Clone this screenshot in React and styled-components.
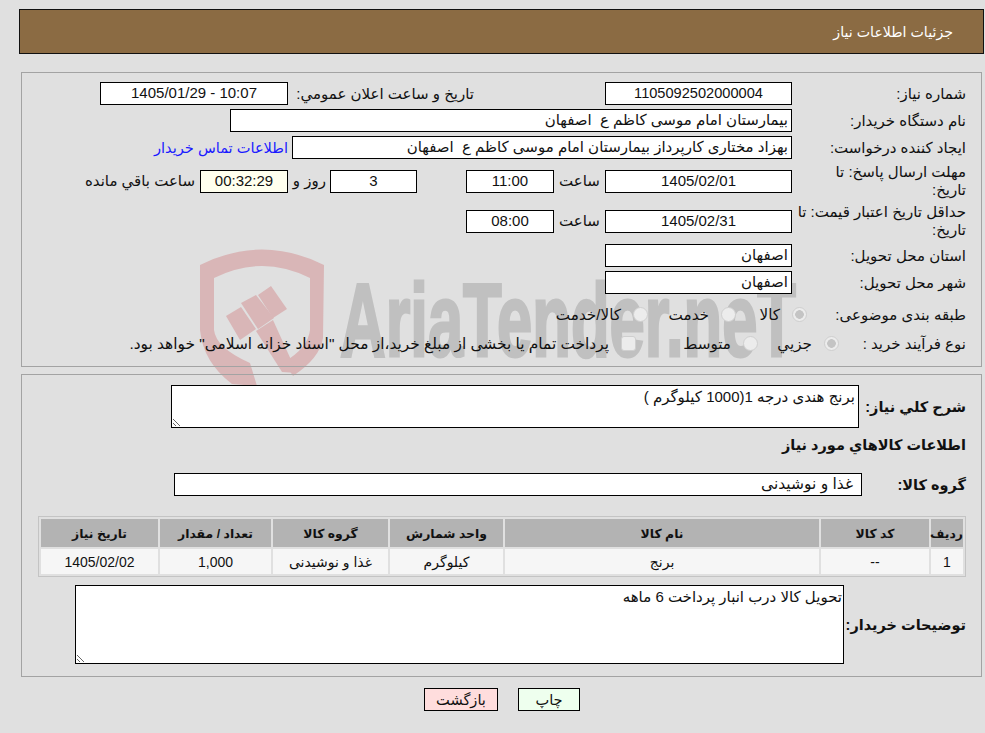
import React from "react";
import styled, { createGlobalStyle } from "styled-components";

const stack = `"Liberation Sans", "DejaVu Sans", sans-serif`;

const Global = createGlobalStyle`
  html, body { margin: 0; padding: 0; background: #e0e0e0; }
  body { font-family: ${stack}; font-size: 15px; color: #111; }
`;
const Page = styled.div`
  position: relative; width: 985px; height: 733px; overflow: hidden; direction: rtl;
  display: flex; flex-direction: column;
`;
const Mark = styled.svg`
  position: absolute; left: 190px; top: 240px; width: 630px; height: 170px; pointer-events: none;
`;
const Header = styled.header`
  position: relative; margin: 9px 1px 0 19px; height: 43px; background: #8b6b43;
  border: 1px solid #111; display: flex; align-items: center; padding-right: 30px;
  color: #fff; font-size: 14.2px;
`;
const Panel = styled.section`
  position: relative; margin: ${p => p.$top}px 3px 0 21px; height: ${p => p.$h}px; box-sizing: border-box;
  border: 1px solid #a3a3a3; padding: ${p => p.$pad}px 15px 0 0;
  display: flex; flex-direction: column;
`;
const Row = styled.div`
  display: flex; align-items: center; min-height: 23px; margin-bottom: ${p => p.$gap ?? 4}px;
  margin-top: ${p => p.$top ?? 0}px;
`;
const Label = styled.div`
  width: ${p => p.$w ?? 174}px; flex: none; line-height: 18px; font-weight: ${p => p.$bold ? 700 : 400};
  font-size: ${p => p.$bold ? "14.5px" : "inherit"}; box-sizing: border-box;
  white-space: ${p => p.$bold ? "nowrap" : "normal"};
`;
const Box = styled.div`
  width: ${p => p.$w}px; height: 23px; box-sizing: border-box; flex: none;
  margin-right: ${p => p.$mr ?? 0}px; border: 1px solid #000;
  background: ${p => p.$bg ?? "#fff"}; text-align: ${p => p.$pad != null ? "start" : "center"};
  padding: 0 ${p => p.$pad ?? 0}px; line-height: 20px; white-space: pre; overflow: hidden;
  font-size: ${p => p.$size ?? 15}px;
`;
const Inline = styled.span`
  margin-right: ${p => p.$mr ?? 0}px; width: ${p => p.$w ? `${p.$w}px` : "auto"}; flex: none;
  text-align: ${p => p.$flush ? "start" : "center"}; white-space: nowrap;
`;
const Link = styled.a`
  color: #1a1aff; margin-right: 4px; text-decoration: none; white-space: nowrap; font-size: 14.6px;
`;
const Options = styled.div`
  display: flex; align-items: center; white-space: nowrap; font-size: 15.2px;
`;
const Option = styled.label`
  display: flex; align-items: center; gap: 12px; width: ${p => p.$w ? `${p.$w}px` : "auto"}; flex: none;
  font-size: ${p => p.$size ? `${p.$size}px` : "inherit"};
`;
const Radio = styled.input`
  appearance: none; margin: 0; flex: none; width: 15px; height: 15px; box-sizing: border-box;
  border-radius: ${p => p.type === "checkbox" ? "3px" : "50%"};
  border: 1px solid #cfcfcf; background: ${p => p.checked ? "radial-gradient(circle, #c4c4c4 0 4px, #ececec 4.6px)" : "#ececec"};
`;
const TextArea = styled.textarea`
  display: block; width: ${p => p.$w}px; height: ${p => p.$h}px; box-sizing: border-box; flex: none; margin: 0;
  border: 1px solid #000; background: #fff; padding: 3px ${p => p.$pr}px 3px 3px; color: #111;
  font: 15px/16px ${stack}; direction: rtl; outline: none; resize: both;
`;
const Table = styled.table`
  width: 928px; height: 61px; border: 1px solid #c4c4c4; border-spacing: 2px; table-layout: fixed;
  border-collapse: separate; flex: none; box-sizing: border-box;
`;
const Head = styled.th`
  background: #b3b3b3; font-size: 12.4px; font-weight: 700; padding: 0; height: 28px;
`;
const Cell = styled.td`
  background: #f6f6f6; font-size: 14px; text-align: center; padding: 0; height: 25px;
`;
const Buttons = styled.div`
  display: flex; justify-content: center; gap: 20px; margin-top: 11px; padding-left: 19px; direction: ltr;
`;
const Button = styled.button`
  width: ${p => p.$w}px; height: 23px; box-sizing: border-box; border: 1px solid #000; background: ${p => p.$bg};
  font: 14.6px ${stack}; color: #111; padding: 0;
`;

const columns = [
  ["ردیف", 32], ["کد کالا", 108], ["نام کالا", 314], ["واحد شمارش", 113],
  ["گروه کالا", 115], ["تعداد / مقدار", 111], ["تاریخ نیاز", 117],
];
const cells = ["1", "--", "برنج", "کیلوگرم", "غذا و نوشیدنی", "1,000", "1405/02/02"];

export default function App() {
  return (
    <Page>
      <Global />
      <Mark viewBox="190 240 630 170">
        <g fill="#d9b6b7">
          <path d="M200 265 Q262 234 324 265 L323 338 Q320 358 293 376 L284 362 Q308 348 310 330 L310 278 Q262 254 214 278 L214 330 Q216 348 250 363 L257 386 L232 384 Q203 362 200 330 Z" />
          <path d="M226 316 L241 307 L256 329 L240 340 Z" />
          <path d="M241 303 L256 295 L274 318 L258 329 Z" />
          <path d="M258 295 L271 286 L287 309 L273 318 Z" />
          <path d="M256 331 L273 320 L297 373 L282 372 Z" />
        </g>
        <text x="340" y="356" fill="#c0c0c0" stroke="#c0c0c0" strokeWidth="3" fontFamily="Liberation Sans, sans-serif" fontWeight="700" fontSize="104" textLength="456" lengthAdjust="spacingAndGlyphs" direction="ltr">AriaTender.neT</text>
      </Mark>
      <Header>جزئیات اطلاعات نیاز</Header>
      <Panel $top={18} $h={295} $pad={9}>
        <Row>
          <Label>شماره نیاز:</Label>
          <Box $w={187} $size={14.6}>1105092502000004</Box>
          <Inline $mr={131} $w={181} $flush>تاریخ و ساعت اعلان عمومي:</Inline>
          <Box $w={188} $mr={5}>10:07 - 1405/01/29</Box>
        </Row>
        <Row>
          <Label>نام دستگاه خریدار:</Label>
          <Box $w={562} $pad={3}>بیمارستان امام موسی کاظم ع  اصفهان</Box>
        </Row>
        <Row>
          <Label>ایجاد کننده درخواست:</Label>
          <Box $w={500} $pad={3}>بهزاد مختاری کارپرداز بیمارستان امام موسی کاظم ع  اصفهان</Box>
          <Link href="#">اطلاعات تماس خریدار</Link>
        </Row>
        <Row>
          <Label>مهلت ارسال پاسخ: تا<br />تاریخ:</Label>
          <Box $w={187}>1405/02/01</Box>
          <Inline $w={51}>ساعت</Inline>
          <Box $w={88}>11:00</Box>
          <Box $w={87} $mr={49}>3</Box>
          <Inline $mr={4} $w={38} $flush>روز و</Inline>
          <Box $w={88} $bg="#ffffee">00:32:29</Box>
          <Inline $mr={5}>ساعت باقي مانده</Inline>
        </Row>
        <Row $gap={5}>
          <Label>حداقل تاریخ اعتبار قیمت: تا تاریخ:</Label>
          <Box $w={187}>1405/02/31</Box>
          <Inline $w={51}>ساعت</Inline>
          <Box $w={88}>08:00</Box>
        </Row>
        <Row>
          <Label>استان محل تحویل:</Label>
          <Box $w={187} $pad={3}>اصفهان</Box>
        </Row>
        <Row $gap={9}>
          <Label>شهر محل تحویل:</Label>
          <Box $w={187} $pad={3}>اصفهان</Box>
        </Row>
        <Row $gap={6}>
          <Label $w={159}>طبقه بندی موضوعی:</Label>
          <Options>
            <Option $w={71}><Radio type="radio" disabled checked readOnly />کالا</Option>
            <Option $w={88}><Radio type="radio" disabled readOnly />خدمت</Option>
            <Option><Radio type="radio" disabled readOnly />کالا/خدمت</Option>
          </Options>
        </Row>
        <Row>
          <Label $w={127}>نوع فرآیند خرید :</Label>
          <Options>
            <Option $w={81}><Radio type="radio" disabled checked readOnly />جزیي</Option>
            <Option $w={122}><Radio type="radio" disabled readOnly />متوسط</Option>
            <Option $size={15.4}><Radio type="checkbox" disabled readOnly />پرداخت تمام یا بخشی از مبلغ خرید،از محل "اسناد خزانه اسلامی" خواهد بود.</Option>
          </Options>
        </Row>
      </Panel>
      <Panel $top={7} $h={303} $pad={10}>
        <Row $gap={5}>
          <Label $w={107} $bold>شرح كلي نياز:</Label>
          <TextArea $w={688} $h={43} $pr={3} readOnly defaultValue="برنج هندی درجه 1(1000 کیلوگرم )" />
        </Row>
        <Row $gap={17}>
          <Label $w={400} $bold>اطلاعات كالاهاي مورد نياز</Label>
        </Row>
        <Row $gap={20}>
          <Label $w={104} $bold>گروه کالا:</Label>
          <Box $w={688} $pad={8} $size={15.5}>غذا و نوشیدنی</Box>
        </Row>
        <Table>
          <colgroup>{columns.map(([name, w]) => <col key={name} style={{ width: w }} />)}</colgroup>
          <thead><tr>{columns.map(([name]) => <Head key={name}>{name}</Head>)}</tr></thead>
          <tbody><tr>{cells.map((c, i) => <Cell key={i}>{c}</Cell>)}</tr></tbody>
        </Table>
        <Row $top={8}>
          <Label $w={122} $bold>توضیحات خریدار:</Label>
          <TextArea $w={769} $h={79} $pr={1} readOnly defaultValue="تحویل کالا درب انبار پرداخت 6 ماهه" />
        </Row>
      </Panel>
      <Buttons>
        <Button $w={74} $bg="#ffdddd">بازگشت</Button>
        <Button $w={62} $bg="#eeffee">چاپ</Button>
      </Buttons>
    </Page>
  );
}
